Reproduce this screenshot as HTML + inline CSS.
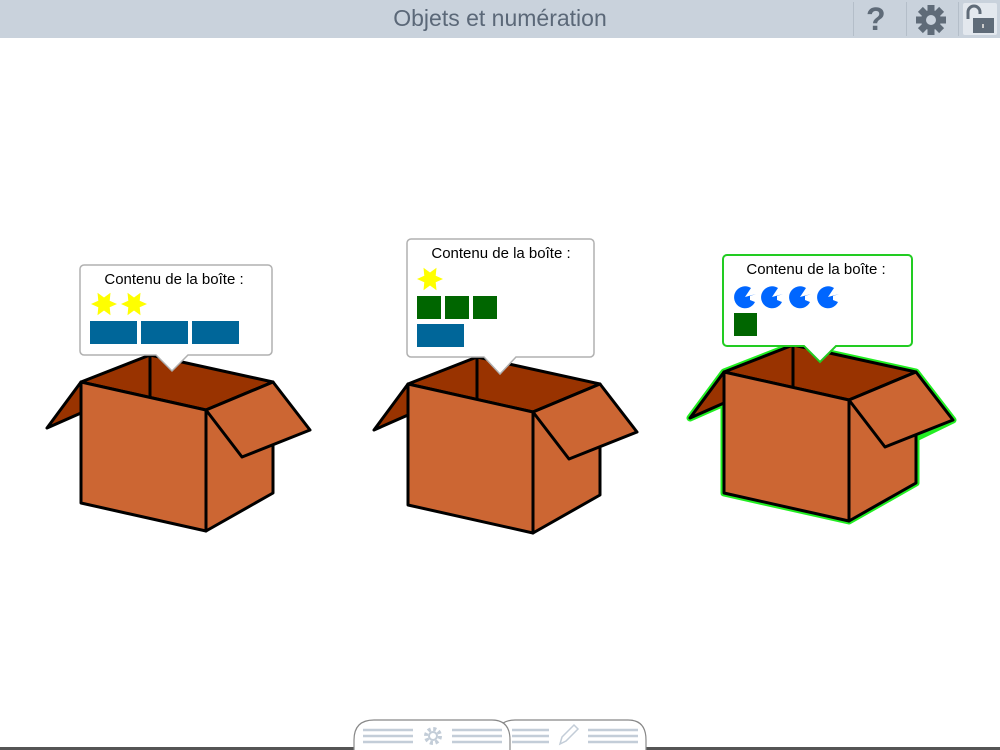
<!DOCTYPE html>
<html><head><meta charset="utf-8"><style>
body{margin:0;width:1000px;height:750px;overflow:hidden;background:#fff;font-family:"Liberation Sans",sans-serif;position:relative}
.hdr{position:absolute;left:0;top:0;width:1000px;height:38px;background:#c9d2dc}
.ttl{position:absolute;left:0;width:1000px;top:5px;text-align:center;font-size:23px;color:#5b6878}
.sep{position:absolute;top:2px;width:1px;height:34px;background:#b4bec9}
</style></head><body>
<div class="hdr"><div class="ttl">Objets et numération</div>
<div class="sep" style="left:853px"></div><div class="sep" style="left:906px"></div><div class="sep" style="left:958px"></div>
<div style="position:absolute;left:866px;top:1px;font-size:32px;font-weight:bold;color:#5f6b78">?</div>
<svg style="position:absolute;left:915px;top:4px" width="32" height="32" viewBox="-16 -16 32 32"><g fill="#5f6b78"><circle r="10"/><g id="t"><rect x="-3.5" y="-15" width="7" height="8"/></g><use href="#t" transform="rotate(45)"/><use href="#t" transform="rotate(90)"/><use href="#t" transform="rotate(135)"/><use href="#t" transform="rotate(180)"/><use href="#t" transform="rotate(225)"/><use href="#t" transform="rotate(270)"/><use href="#t" transform="rotate(315)"/></g><circle r="5" fill="#c9d2dc"/></svg>
<svg style="position:absolute;left:962px;top:2px" width="36" height="34"><rect x="1" y="1" width="34" height="32" rx="2" fill="#e3e8ee"/><path d="M6 17 V10 a6 6 0 0 1 12 0 V12" fill="none" stroke="#5f6b78" stroke-width="3"/><rect x="11" y="16" width="21" height="15" fill="#5f6b78"/><rect x="20" y="22" width="2" height="4" fill="#ccc"/></svg>
</div>
<svg width="1000" height="750" style="position:absolute;left:0;top:0">
<defs>
<g id="box" stroke="#000" stroke-width="3" stroke-linejoin="round">
<polygon points="81,382 150,355 273,382 206,410" fill="#993300"/>
<line x1="150" y1="355" x2="150" y2="397"/>
<polygon points="81,382 47,428 81,413" fill="#993300"/>
<polygon points="206,410 273,382 273,493 206,531" fill="#cc6633"/>
<polygon points="81,382 206,410 206,531 81,503" fill="#cc6633"/>
<polygon points="206,410 273,382 310,430 242,457" fill="#cc6633"/>
</g>
<polygon id="star" points="0,-13 3.3,-5.7 11.3,-6.5 6.5,0 11.3,6.5 3.3,5.7 0,13 -3.3,5.7 -11.3,6.5 -6.5,0 -11.3,-6.5 -3.3,-5.7" fill="#ffff00" transform="rotate(90)"/>
<path id="pac" d="M0,0 L11,-3 L5,-1 L5,3 L10,5 A11,11 0 1,1 6,-9 Z" fill="#0066ff"/>
</defs>
<use href="#box"/>
<use href="#box" transform="translate(327,2)"/>
<g transform="translate(643,-10)">
<polygon points="81,382 150,355 273,382 310,430 273,448 273,493 206,531 81,503 81,413 47,428" fill="none" stroke="#22ee22" stroke-width="7" stroke-linejoin="round"/>
<use href="#box"/></g>
<!-- bubble1 -->
<path d="M84,265 H268 a4,4 0 0 1 4,4 V351 a4,4 0 0 1 -4,4 H188 L172,371 L156,355 H84 a4,4 0 0 1 -4,-4 V269 a4,4 0 0 1 4,-4Z" fill="#fff" stroke="#b0b0b0" stroke-width="1.5"/>
<text x="174" y="284" font-size="15" text-anchor="middle" font-family="Liberation Sans,sans-serif">Contenu de la boîte :</text>
<use href="#star" x="104" y="304"/><use href="#star" x="134" y="304"/>
<rect x="90" y="321" width="47" height="23" fill="#006699"/><rect x="141" y="321" width="47" height="23" fill="#006699"/><rect x="192" y="321" width="47" height="23" fill="#006699"/>
<!-- bubble2 -->
<path d="M411,239 H590 a4,4 0 0 1 4,4 V353 a4,4 0 0 1 -4,4 H516 L500,374 L484,357 H411 a4,4 0 0 1 -4,-4 V243 a4,4 0 0 1 4,-4Z" fill="#fff" stroke="#b0b0b0" stroke-width="1.5"/>
<text x="501" y="258" font-size="15" text-anchor="middle" font-family="Liberation Sans,sans-serif">Contenu de la boîte :</text>
<use href="#star" x="430" y="279"/>
<rect x="417" y="296" width="24" height="23" fill="#006600"/><rect x="445" y="296" width="24" height="23" fill="#006600"/><rect x="473" y="296" width="24" height="23" fill="#006600"/>
<rect x="417" y="324" width="47" height="23" fill="#006699"/>
<!-- bubble3 -->
<path d="M727,255 H908 a4,4 0 0 1 4,4 V342 a4,4 0 0 1 -4,4 H836 L820,362 L804,346 H727 a4,4 0 0 1 -4,-4 V259 a4,4 0 0 1 4,-4Z" fill="#fff" stroke="#22cc22" stroke-width="2"/>
<text x="816" y="274" font-size="15" text-anchor="middle" font-family="Liberation Sans,sans-serif">Contenu de la boîte :</text>
<use href="#pac" x="745" y="297"/><use href="#pac" x="772" y="297"/><use href="#pac" x="800" y="297"/><use href="#pac" x="828" y="297"/>
<rect x="734" y="313" width="23" height="23" fill="#006600"/>
<!-- bottom tabs -->
<line x1="0" y1="748.5" x2="1000" y2="748.5" stroke="#555" stroke-width="3"/>
<path d="M496,750 V740 Q496,720 515,720 H628 Q646,720 646,740 V750" fill="#fff" stroke="#888" stroke-width="1.2"/>
<path d="M354,750 V740 Q354,720 374,720 H492 Q510,720 510,740 V750" fill="#fff" stroke="#888" stroke-width="1.2"/>
<g stroke="#c3cdd8" stroke-width="2.5"><path d="M363,730h50M363,736h50M363,742h50M452,730h50M452,736h50M452,742h50M512,730h37M512,736h37M512,742h37M588,730h50M588,736h50M588,742h50"/></g>
<circle cx="433" cy="736" r="7" fill="none" stroke="#c3cdd8" stroke-width="4" stroke-dasharray="3 2.5"/><circle cx="433" cy="736" r="4" fill="none" stroke="#c3cdd8" stroke-width="2"/>
<path d="M560,744 l2,-7 l12,-12 l4,4 l-12,12z" fill="none" stroke="#c3cdd8" stroke-width="1.5"/>
</svg>
</body></html>
